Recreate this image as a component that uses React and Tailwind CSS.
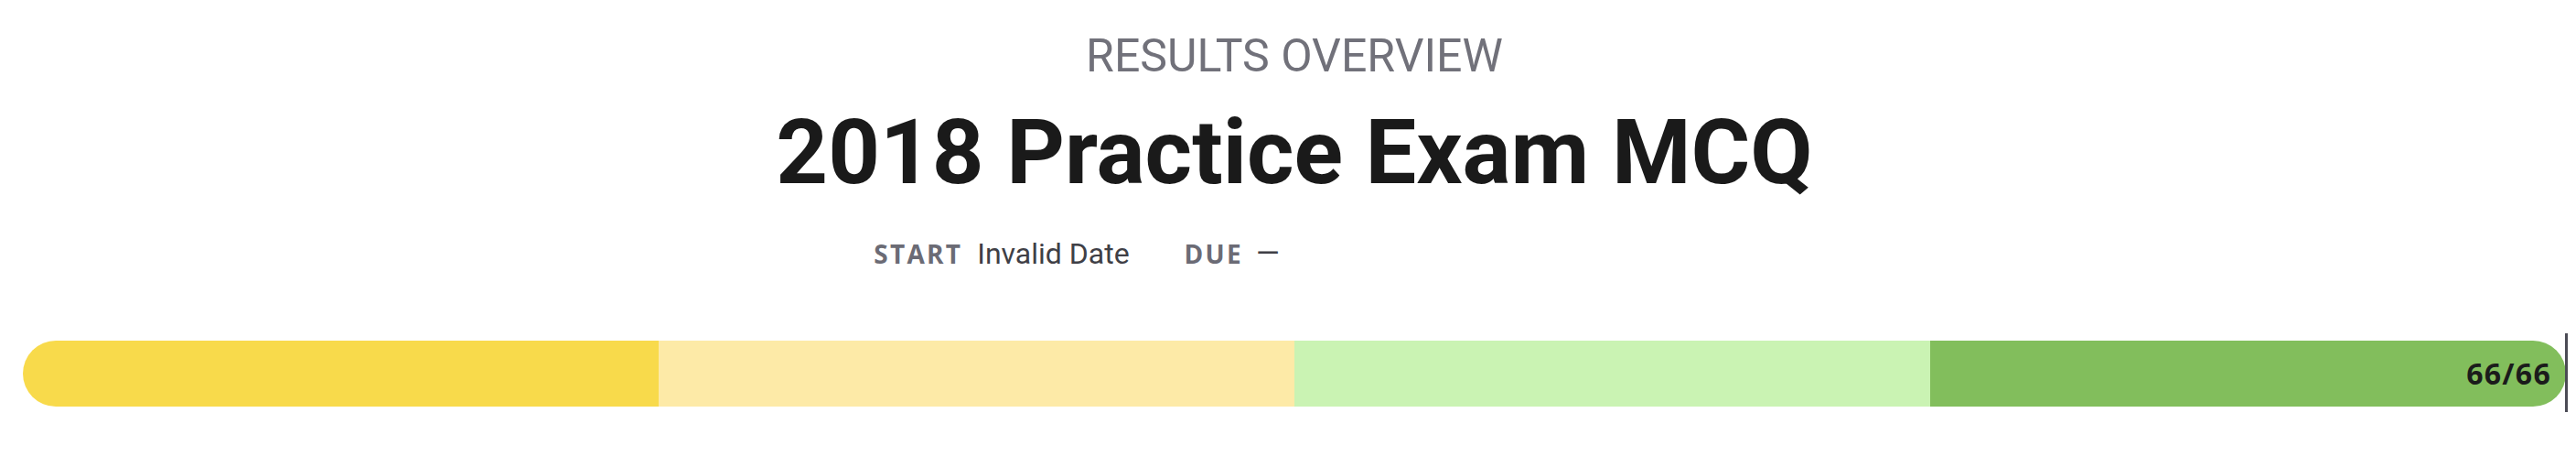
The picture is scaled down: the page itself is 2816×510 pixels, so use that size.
import React from 'react'

const segments = [
  { key: 'low', color: 'bg-[#f8da4b]', rounded: 'rounded-l-full' },
  { key: 'mid', color: 'bg-[#fdeaa7]', rounded: '' },
  { key: 'good', color: 'bg-[#caf3b3]', rounded: '' },
  { key: 'best', color: 'bg-[#82be5c]', rounded: 'rounded-r-full' },
]

export default function App() {
  const score = 66
  const total = 66

  return (
    <div className="w-full h-[510px] bg-white pl-[25px] pr-[11px] font-['Roboto',sans-serif]">
      {/* Header */}
      <div className="flex flex-col items-center text-center">
        <div className="mt-[36px] text-[50px] leading-none text-[#71717a] uppercase">
          Results Overview
        </div>
        <h1 className="mt-[31px] text-[99px] leading-none font-bold text-[#1a1a1a]">
          2018 Practice Exam MCQ
        </h1>
      </div>

      {/* Dates */}
      <div className="mt-[44px] flex items-baseline justify-center pr-[476px]">
        <div className="flex items-baseline gap-[16px]">
          <span className="font-['Open_Sans',sans-serif] font-bold text-[28px] leading-none tracking-[0.08em] text-[#6b6b75]">
            START
          </span>
          <span className="text-[32px] leading-none text-[#3f3f46]">Invalid Date</span>
        </div>
        <div className="ml-[60px] flex items-baseline gap-[14px]">
          <span className="font-['Open_Sans',sans-serif] font-bold text-[28px] leading-none tracking-[0.08em] text-[#6b6b75]">
            DUE
          </span>
          <span className="text-[33px] leading-none text-[#3f3f46]">—</span>
        </div>
      </div>

      {/* Score bar */}
      <div className="relative mt-[79px] h-[72px]">
        <div className="flex h-full w-full">
          {segments.map((s, i) => (
            <div key={s.key} className={`flex-1 h-full ${s.color} ${s.rounded} flex items-center justify-end`}>
              {i === segments.length - 1 && (
                <span className="pr-[16px] font-['Open_Sans',sans-serif] font-bold text-[32px] leading-none tracking-[0.04em] text-[#1b1b1b]">
                  {score}/{total}
                </span>
              )}
            </div>
          ))}
        </div>
        <div className="absolute right-[-2px] top-[-8px] bottom-[-6px] w-[3px] bg-[#4b4b55]" />
      </div>
    </div>
  )
}
